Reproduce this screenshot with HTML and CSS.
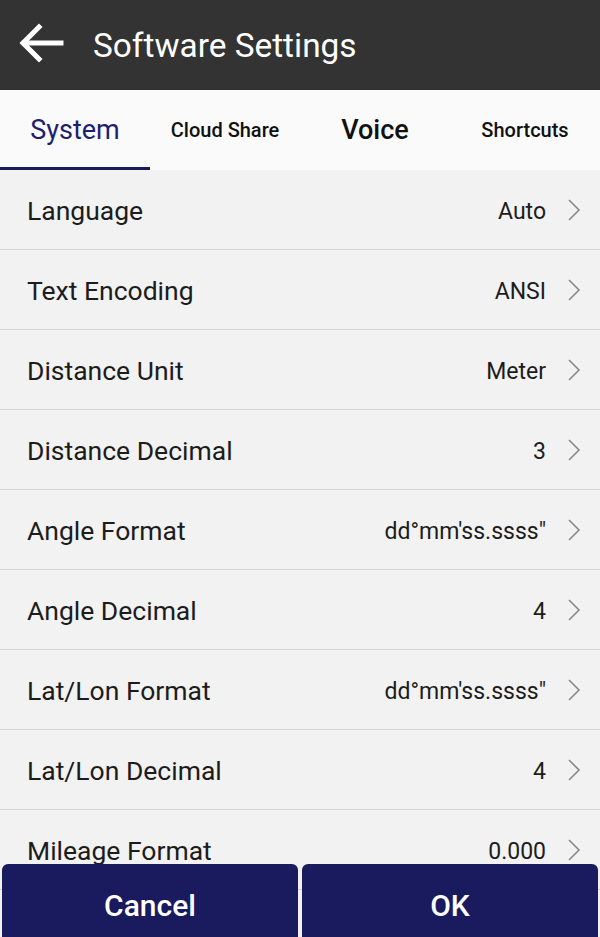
FILE: index.html
```html
<!DOCTYPE html>
<html>
<head>
<meta charset="utf-8">
<link rel="stylesheet" href="styles.css">
</head>
<body>
<div class="app">
  <header class="topbar">
    <svg class="back" width="48" height="48" viewBox="0 0 48 48"><path d="M44 23H7M22 7L6 23l16 16" fill="none" stroke="#fff" stroke-width="5" stroke-linecap="square" stroke-linejoin="miter"/></svg>
    <h1 class="title">Software Settings</h1>
  </header>
  <nav class="tabs">
    <div class="tab tab-active"><span class="tab-big">System</span></div>
    <div class="tab"><span class="tab-small">Cloud Share</span></div>
    <div class="tab"><span class="tab-big">Voice</span></div>
    <div class="tab"><span class="tab-small">Shortcuts</span></div>
  </nav>
  <main class="list">
    <div class="row"><span class="label">Language</span><span class="value">Auto</span><svg class="chev" viewBox="0 0 14 24"><path d="M2 2l10 10L2 22" fill="none" stroke="#888" stroke-width="1.6"/></svg></div>
    <div class="row"><span class="label">Text Encoding</span><span class="value">ANSI</span><svg class="chev" viewBox="0 0 14 24"><path d="M2 2l10 10L2 22" fill="none" stroke="#888" stroke-width="1.6"/></svg></div>
    <div class="row"><span class="label">Distance Unit</span><span class="value">Meter</span><svg class="chev" viewBox="0 0 14 24"><path d="M2 2l10 10L2 22" fill="none" stroke="#888" stroke-width="1.6"/></svg></div>
    <div class="row"><span class="label">Distance Decimal</span><span class="value">3</span><svg class="chev" viewBox="0 0 14 24"><path d="M2 2l10 10L2 22" fill="none" stroke="#888" stroke-width="1.6"/></svg></div>
    <div class="row"><span class="label">Angle Format</span><span class="value">dd°mm'ss.ssss"</span><svg class="chev" viewBox="0 0 14 24"><path d="M2 2l10 10L2 22" fill="none" stroke="#888" stroke-width="1.6"/></svg></div>
    <div class="row"><span class="label">Angle Decimal</span><span class="value">4</span><svg class="chev" viewBox="0 0 14 24"><path d="M2 2l10 10L2 22" fill="none" stroke="#888" stroke-width="1.6"/></svg></div>
    <div class="row"><span class="label">Lat/Lon Format</span><span class="value">dd°mm'ss.ssss"</span><svg class="chev" viewBox="0 0 14 24"><path d="M2 2l10 10L2 22" fill="none" stroke="#888" stroke-width="1.6"/></svg></div>
    <div class="row"><span class="label">Lat/Lon Decimal</span><span class="value">4</span><svg class="chev" viewBox="0 0 14 24"><path d="M2 2l10 10L2 22" fill="none" stroke="#888" stroke-width="1.6"/></svg></div>
    <div class="row"><span class="label">Mileage Format</span><span class="value">0.000</span><svg class="chev" viewBox="0 0 14 24"><path d="M2 2l10 10L2 22" fill="none" stroke="#888" stroke-width="1.6"/></svg></div>
  </main>
  <footer class="actions">
    <button class="btn">Cancel</button>
    <button class="btn">OK</button>
  </footer>
</div>
</body>
</html>
```
FILE: styles.css
```css
* { box-sizing: border-box; }
html, body { margin: 0; padding: 0; }
body {
  font-family: Roboto, "Liberation Sans", sans-serif;
  background: #f2f2f2;
  width: 600px;
  height: 937px;
  overflow: hidden;
}
.app { position: relative; width: 600px; height: 937px; overflow: hidden; }
.topbar {
  height: 90px;
  background: #333333;
  display: flex;
  align-items: center;
  padding-left: 17px;
}
.back { width: 48px; height: 48px; margin-top: -2px; }
.title {
  margin: 0 0 0 28px;
  font-weight: 400;
  font-size: 33.4px;
  color: #ffffff;
}
.tabs {
  height: 80px;
  background: #fafafa;
  display: grid;
  grid-template-columns: repeat(4, 1fr);
}
.tab {
  display: flex;
  align-items: center;
  justify-content: center;
  color: #111;
  border-bottom: 3px solid transparent;
  padding-top: 3px;
}
.tab-active { border-bottom-color: #1a1a5e; color: #1f1f70; }
.tab-big { font-size: 27px; font-weight: 500; }
.tab-active .tab-big { font-weight: 400; }
.tab-small { font-size: 20px; font-weight: 500; }
.list { background: #f2f2f2; }
.row {
  height: 80px;
  display: flex;
  align-items: center;
  padding: 0 19px 0 27px;
  border-bottom: 1px solid #d6d6d6;
}
.label { font-size: 26.5px; color: #1c1c1c; flex: 1; padding-top: 2px; }
.value { font-size: 23px; color: #1c1c1c; margin-right: 21px; padding-top: 3px; }
.chev { width: 14px; height: 24px; }
.actions {
  position: absolute;
  left: 0; right: 0; bottom: 0;
  height: 73px;
  display: flex;
  gap: 4px;
  padding: 0 2px;
}
.btn {
  flex: 1;
  border: none;
  border-radius: 6px 6px 0 0;
  background: #1a1a5e;
  color: #ffffff;
  font-family: Roboto, "Liberation Sans", sans-serif;
  font-size: 30px;
  font-weight: 500;
  padding-top: 10px;
}
```
